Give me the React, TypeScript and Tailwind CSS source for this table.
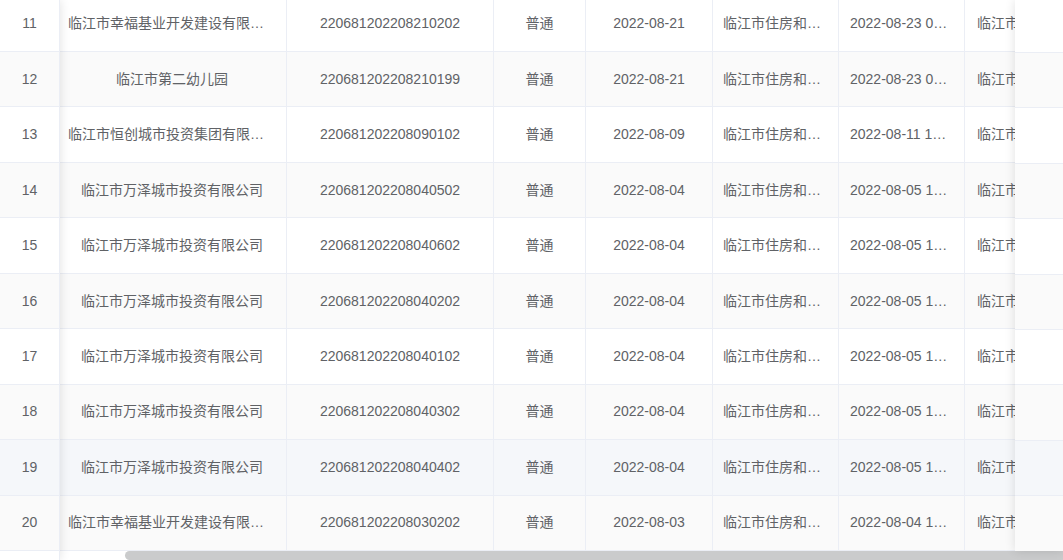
// Scrolled Element-style data table: fixed index column on the left, fixed
// (empty) action column on the right, horizontal scrollbar along the bottom.

type Row = {
  no: number
  company: string
  code: string
  kind: string
  date: string
  org: string
  time: string
}

const ORG = '临江市住房和城乡建设局'

const rows: Row[] = [
  { no: 11, company: '临江市幸福基业开发建设有限公司', code: '220681202208210202', kind: '普通', date: '2022-08-21', org: ORG, time: '2022-08-23 09:21:36' },
  { no: 12, company: '临江市第二幼儿园', code: '220681202208210199', kind: '普通', date: '2022-08-21', org: ORG, time: '2022-08-23 09:18:02' },
  { no: 13, company: '临江市恒创城市投资集团有限公司', code: '220681202208090102', kind: '普通', date: '2022-08-09', org: ORG, time: '2022-08-11 14:05:47' },
  { no: 14, company: '临江市万泽城市投资有限公司', code: '220681202208040502', kind: '普通', date: '2022-08-04', org: ORG, time: '2022-08-05 15:32:10' },
  { no: 15, company: '临江市万泽城市投资有限公司', code: '220681202208040602', kind: '普通', date: '2022-08-04', org: ORG, time: '2022-08-05 15:30:44' },
  { no: 16, company: '临江市万泽城市投资有限公司', code: '220681202208040202', kind: '普通', date: '2022-08-04', org: ORG, time: '2022-08-05 15:28:19' },
  { no: 17, company: '临江市万泽城市投资有限公司', code: '220681202208040102', kind: '普通', date: '2022-08-04', org: ORG, time: '2022-08-05 15:26:53' },
  { no: 18, company: '临江市万泽城市投资有限公司', code: '220681202208040302', kind: '普通', date: '2022-08-04', org: ORG, time: '2022-08-05 15:25:08' },
  { no: 19, company: '临江市万泽城市投资有限公司', code: '220681202208040402', kind: '普通', date: '2022-08-04', org: ORG, time: '2022-08-05 15:23:41' },
  { no: 20, company: '临江市幸福基业开发建设有限公司', code: '220681202208030202', kind: '普通', date: '2022-08-03', org: ORG, time: '2022-08-04 16:40:12' },
]

const HOVER_ROW = 19

function rowBg(no: number) {
  if (no === HOVER_ROW) return 'bg-[#f5f7fa]'
  return no % 2 === 0 ? 'bg-[#fafafa]' : 'bg-white'
}

const cell = 'h-full flex items-center border-r border-[#ebeef5] px-[10px] shrink-0'
const text = 'w-full truncate text-center'

export default function App() {
  return (
    <div
      className="relative w-[1063px] h-[560px] overflow-hidden bg-white text-[14px] text-[#606266]"
      style={{ fontFamily: '"Liberation Sans", "Noto Sans CJK SC", sans-serif' }}
    >
      {/* scrolled body */}
      <div className="w-[1165px]">
        <div className="-mt-[3.4px]">
          {rows.map(r => (
            <div key={r.no} className={`flex h-[55.44px] border-b border-[#ebeef5] ${rowBg(r.no)}`}>
              <div className="w-[58px] shrink-0" />
              <div className={`${cell} w-[229px]`}><div className={text}>{r.company}</div></div>
              <div className={`${cell} w-[207px]`}><div className={text}>{r.code}</div></div>
              <div className={`${cell} w-[92px]`}><div className={text}>{r.kind}</div></div>
              <div className={`${cell} w-[127px]`}><div className={text}>{r.date}</div></div>
              <div className={`${cell} w-[126px]`}><div className={text}>{r.org}</div></div>
              <div className={`${cell} w-[126px] pl-[11px] pr-[12px]`}><div className="w-full truncate">{r.time}</div></div>
              <div className={`${cell} w-[200px] pl-[12px]`}><div className="w-full truncate">{r.org}</div></div>
            </div>
          ))}
        </div>
        {/* horizontal scrollbar */}
        <div className="h-[9px] pl-[125px]">
          <div className="h-full w-[1000px] rounded-full bg-[#cacbcc]" />
        </div>
      </div>

      {/* fixed index column */}
      <div className="absolute left-0 top-0 w-[60px] h-full bg-white border-r border-[#ebeef5] shadow-[0_0_10px_rgba(0,0,0,0.12)]">
        <div className="-mt-[3.4px]">
          {rows.map(r => (
            <div key={r.no} className={`h-[55.44px] border-b border-[#ebeef5] flex items-center justify-center ${rowBg(r.no)}`}>
              {r.no}
            </div>
          ))}
        </div>
      </div>

      {/* fixed action column (content scrolled out of view) */}
      <div className="absolute right-0 top-0 w-[48px] h-[551px] overflow-hidden bg-white shadow-[0_0_10px_rgba(0,0,0,0.12)]">
        <div className="-mt-[2.6px]">
          {rows.map(r => (
            <div key={r.no} className={`h-[55.44px] border-b border-[#ebeef5] ${rowBg(r.no)}`} />
          ))}
        </div>
      </div>
    </div>
  )
}
